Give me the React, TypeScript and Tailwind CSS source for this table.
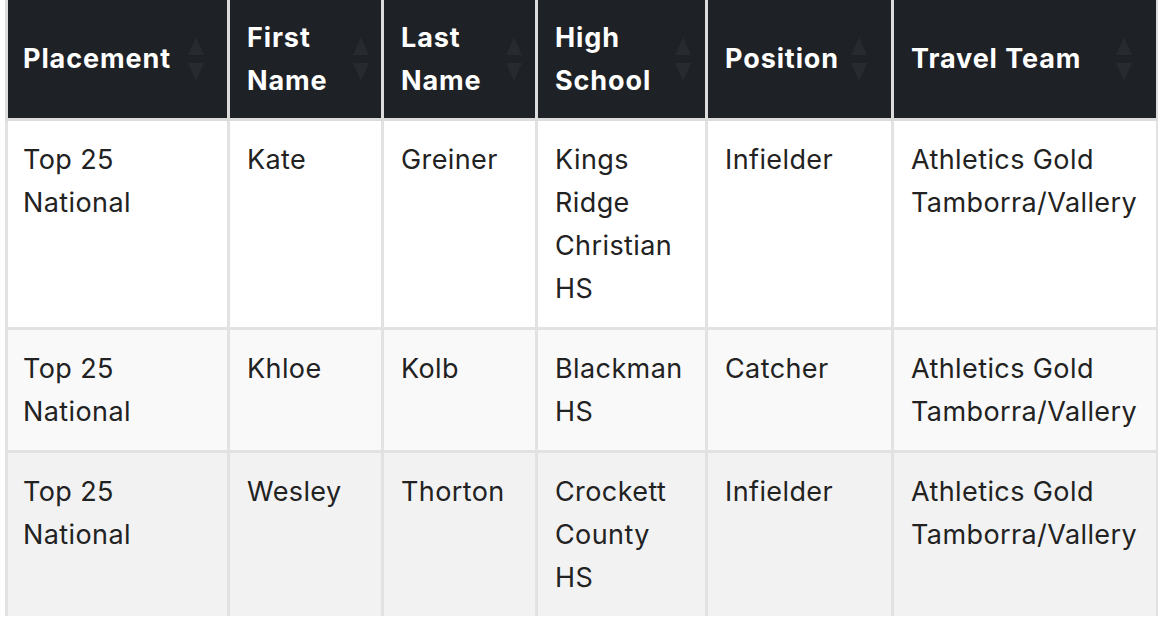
import { Fragment } from 'react';

type Player = {
  placement: string;
  first: string;
  last: string;
  school: string;
  position: string;
  team: string;
};

const players: Player[] = [
  {
    placement: 'Top 25 National',
    first: 'Kate',
    last: 'Greiner',
    school: 'Kings Ridge Christian HS',
    position: 'Infielder',
    team: 'Athletics Gold Tamborra/Vallery',
  },
  {
    placement: 'Top 25 National',
    first: 'Khloe',
    last: 'Kolb',
    school: 'Blackman HS',
    position: 'Catcher',
    team: 'Athletics Gold Tamborra/Vallery',
  },
  {
    placement: 'Top 25 National',
    first: 'Wesley',
    last: 'Thorton',
    school: 'Crockett County HS',
    position: 'Infielder',
    team: 'Athletics Gold Tamborra/Vallery',
  },
];

const columns = [
  { label: ['Placement'], width: 'w-[222px]', icon: 'right-[22px]' },
  { label: ['First', 'Name'], width: 'w-[154px]', icon: 'right-[11px]' },
  { label: ['Last', 'Name'], width: 'w-[154px]', icon: 'right-[12px]' },
  { label: ['High', 'School'], width: 'w-[170px]', icon: 'right-[13px]' },
  { label: ['Position'], width: 'w-[186px]', icon: 'right-[23px]' },
  { label: ['Travel Team'], width: 'w-[265px]', icon: 'right-[23px]' },
];

const rowBg = ['bg-white', 'bg-[#f9f9f9]', 'bg-[#f2f2f2]'];

const SortIcon = ({ className }: { className: string }) => (
  <svg
    viewBox="0 0 18 46"
    className={`absolute top-1/2 -translate-y-1/2 w-[18px] h-[46px] ${className}`}
  >
    <path d="M9 1 L17 19 L1 19 Z" fill="#272b30" />
    <path d="M9 45 L17 27 L1 27 Z" fill="#272b30" />
  </svg>
);

export default function App() {
  return (
    <div
      className="min-h-[626px] bg-white pl-[5px] text-[#222]"
      style={{ fontFamily: 'Inter, "Noto Sans", sans-serif' }}
    >
      <table className="w-[1151px] table-fixed border-collapse text-[27px] leading-[43px] tracking-[0.4px]">
        <colgroup>
          {columns.map((c, i) => (
            <col key={i} className={c.width} />
          ))}
        </colgroup>
        <thead>
          <tr className="h-[119px] bg-[#1e2125]">
            {columns.map((c, i) => (
              <th
                key={i}
                className={`relative border-x-[3px] border-b-[3px] border-[#dcdcdc] border-t-0 pr-[17px] text-left align-middle font-bold tracking-[0.9px] text-white ${
                  i === 0 ? 'pl-[15px]' : 'pl-[17px]'
                }`}
              >
                {c.label.map((l, j) => (
                  <Fragment key={j}>
                    {j > 0 && <br />}
                    {l}
                  </Fragment>
                ))}
                <SortIcon className={c.icon} />
              </th>
            ))}
          </tr>
        </thead>
        <tbody>
          {players.map((p, i) => (
            <tr key={i} className={rowBg[i]}>
              {[p.placement, p.first, p.last, p.school, p.position, p.team].map(
                (v, j) => (
                  <td
                    key={j}
                    className={`border-x-[3px] border-[#e2e2e2] pr-[12px] py-[17px] align-top ${
                      j === 0 ? 'pl-[15px]' : 'pl-[17px]'
                    } ${i < players.length - 1 ? 'border-b-[3px]' : 'border-b-0'}`}
                  >
                    {v}
                  </td>
                )
              )}
            </tr>
          ))}
        </tbody>
      </table>
    </div>
  );
}
